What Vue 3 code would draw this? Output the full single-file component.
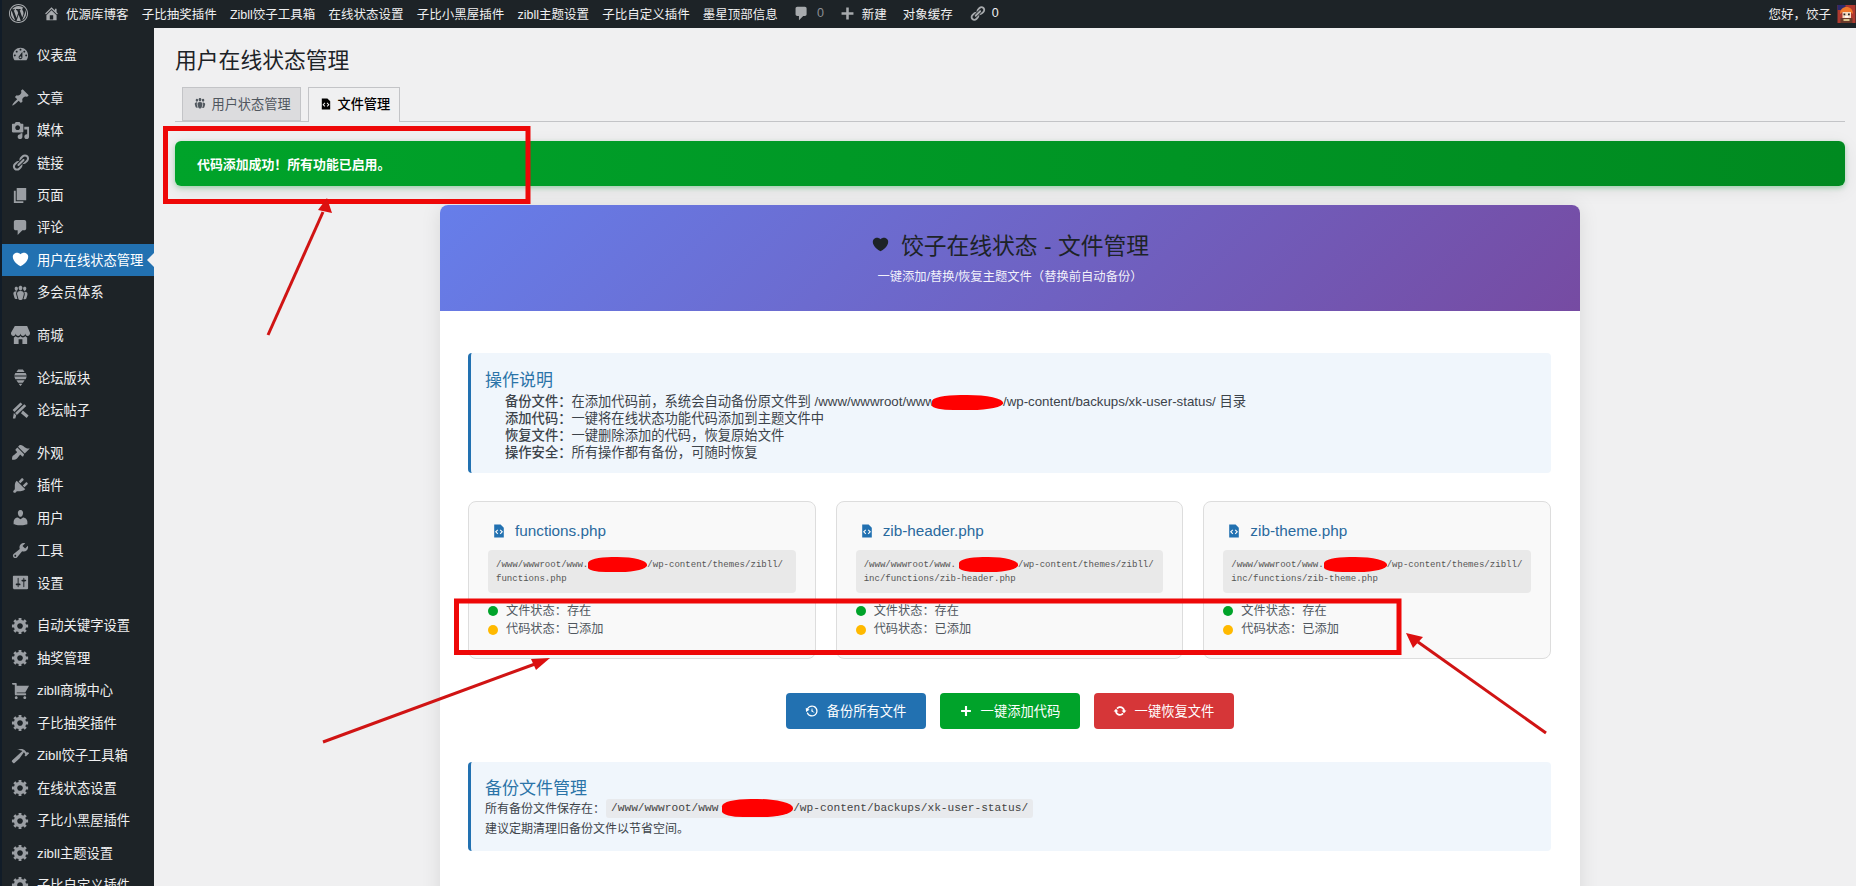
<script setup>
const icons = {
  dashboard: 'M3.76 16h12.48c1.1-1.37 1.76-3.11 1.76-5 0-4.42-3.58-8-8-8s-8 3.58-8 8c0 1.89.66 3.63 1.76 5zM10 4c.55 0 1 .45 1 1s-.45 1-1 1-1-.45-1-1 .45-1 1-1zM6 6c.55 0 1 .45 1 1s-.45 1-1 1-1-.45-1-1 .45-1 1-1zm8 0c.55 0 1 .45 1 1s-.45 1-1 1-1-.45-1-1 .45-1 1-1zm-5.37 5.55L12 7v6c0 1.1-.9 2-2 2s-2-.9-2-2c0-.57.24-1.08.63-1.45zM4 10c.55 0 1 .45 1 1s-.45 1-1 1-1-.45-1-1 .45-1 1-1zm12 0c.55 0 1 .45 1 1s-.45 1-1 1-1-.45-1-1 .45-1 1-1zm-5 3c0-.55-.45-1-1-1s-1 .45-1 1 .45 1 1 1 1-.45 1-1z',
  post: 'M10.44 3.02l1.82-1.82 6.36 6.35-1.83 1.82c-1.05-.68-2.48-.57-3.41.36l-.75.75c-.92.93-1.04 2.35-.35 3.41l-1.83 1.82-2.41-2.41-2.8 2.79c-.42.42-3.38 2.71-3.8 2.29s1.86-3.39 2.28-3.81l2.79-2.79L4.1 9.36l1.83-1.82c1.05.69 2.48.57 3.4-.36l.75-.75c.93-.92 1.05-2.35.36-3.41z',
  media: 'M13 11V4c0-.55-.45-1-1-1h-1.67L9 1H5L3.67 3H2c-.55 0-1 .45-1 1v7c0 .55.45 1 1 1h10c.55 0 1-.45 1-1zM7 4.5c1.38 0 2.5 1.12 2.5 2.5S8.38 9.5 7 9.5 4.5 8.38 4.5 7 5.62 4.5 7 4.5zM14 6h5v10.5c0 1.38-1.12 2.5-2.5 2.5S14 17.88 14 16.5s1.12-2.5 2.5-2.5c.17 0 .34.02.5.05V9h-3V6zm-4 8.05V13h2v3.5c0 1.38-1.12 2.5-2.5 2.5S7 17.88 7 16.5 8.12 14 9.5 14c.17 0 .34.02.5.05z',
  links: 'M17.74 2.76c1.68 1.69 1.68 4.41 0 6.1l-1.53 1.52c-1.12 1.12-2.7 1.47-4.14 1.09l2.62-2.61.76-.77.76-.76c.84-.84.84-2.2 0-3.04-.84-.85-2.2-.85-3.04 0l-.77.76-3.38 3.38c-.37-1.44-.02-3.02 1.1-4.14l1.52-1.53c1.69-1.68 4.42-1.68 6.1 0zM8.59 13.43l5.34-5.34c.42-.42.42-1.1 0-1.52-.44-.43-1.13-.39-1.53 0l-5.33 5.34c-.42.42-.42 1.1 0 1.52.44.43 1.13.39 1.52 0zm-.76 2.29l4.14-4.15c.38 1.44.03 3.02-1.09 4.14l-1.52 1.53c-1.69 1.68-4.41 1.68-6.1 0-1.68-1.68-1.68-4.42 0-6.1l1.53-1.52c1.12-1.12 2.7-1.47 4.14-1.1l-4.14 4.15c-.85.84-.85 2.2 0 3.05.84.84 2.2.84 3.04 0z',
  page: 'M6 15V2h10v13H6zm-1 1h8v2H3V5h2v11z',
  comments: 'M5 2h9c1.1 0 2 .9 2 2v7c0 1.1-.9 2-2 2h-2l-5 5v-5H5c-1.1 0-2-.9-2-2V4c0-1.1.9-2 2-2z',
  heart: 'M10 17.12c3.33-1.4 5.74-3.79 7.04-6.21 1.28-2.41 1.46-4.81.32-6.25-1.03-1.29-2.37-1.78-3.73-1.74s-2.68.63-3.63 1.46c-.95-.83-2.27-1.42-3.63-1.46s-2.7.45-3.73 1.74c-1.14 1.44-.96 3.84.34 6.25 1.28 2.42 3.69 4.81 7.02 6.21z',
  groups: 'M8.03 4.46c-.29 1.28.55 3.46 1.97 3.46 1.41 0 2.25-2.18 1.96-3.46-.22-.98-1.08-1.63-1.96-1.63-.89 0-1.74.65-1.97 1.63zm-4.13.9c-.25 1.08.47 2.93 1.67 2.93s1.92-1.85 1.67-2.93c-.19-.83-.92-1.39-1.67-1.39s-1.48.56-1.67 1.39zm8.86 0c-.25 1.08.47 2.93 1.66 2.93 1.2 0 1.92-1.85 1.67-2.93-.19-.83-.92-1.39-1.67-1.39-.74 0-1.47.56-1.66 1.39zm-.59 11.43l1.25-4.3C14.2 10 12.71 8.47 10 8.47c-2.72 0-4.21 1.53-3.44 4.02l1.26 4.3C8.05 17.51 9 18 10 18c.98 0 1.94-.49 2.17-1.21zm-6.1-7.63c-.49.67-.96 1.83-.42 3.59l1.12 3.79c-.34.2-.77.31-1.2.31-.85 0-1.65-.41-1.85-1.03l-1.07-3.65c-.65-2.11.61-3.41 2.92-3.41l.24.01c.29.09.3.3.26.39zm8.02-.03l.24-.01c2.31 0 3.57 1.3 2.92 3.41l-1.07 3.65c-.2.62-1 1.03-1.85 1.03-.43 0-.86-.11-1.2-.31l1.11-3.77c.54-1.76.07-2.92-.42-3.58-.04-.09-.03-.33.27-.42z',
  store: 'M1 10c.41.29.96.43 1.5.43.55 0 1.09-.14 1.5-.43.62-.46 1-1.17 1-2 0 .83.37 1.54 1 2 .41.29.96.43 1.5.43.55 0 1.09-.14 1.5-.43.62-.46 1-1.17 1-2 0 .83.37 1.54 1 2 .41.29.96.43 1.51.43.54 0 1.08-.14 1.49-.43.62-.46 1-1.17 1-2 0 .83.37 1.54 1 2 .41.29.96.43 1.5.43.55 0 1.09-.14 1.5-.43.63-.46 1-1.17 1-2V7l-3-7H4L0 7v1c0 .83.37 1.54 1 2zm2 8.99h5v-5h4v5h5v-7c-.37-.05-.72-.22-1-.43-.63-.45-1-.73-1-1.56 0 .83-.38 1.11-1 1.56-.41.3-.95.43-1.49.44-.55 0-1.1-.14-1.51-.44-.63-.45-1-.73-1-1.56 0 .83-.38 1.11-1 1.56-.41.3-.95.43-1.5.44-.54 0-1.09-.14-1.5-.44-.63-.45-1-.73-1-1.57 0 .84-.38 1.12-1 1.57-.29.21-.63.38-1 .44v6.99z',
  hive: 'M7.5 1.5h5l1.8 2.6H5.7zM4.6 5.2h10.8l1.2 2.8H3.4zM3.4 9h13.2l-1.2 2.8H4.6zM5.7 12.8h8.6l-1.8 2.8h-5zM8 16.6h4L10 19z',
  posts: 'M10 1.5l2 1.8-8.4 8.2-1.9-2zM14 3.5l2 1.8-9.8 9.4-1.9-2zM3 12.5l2.5 2.6-1 3.4H2zM12.5 10l6 5.2-2 2.8-6-5.2z',
  brush: 'M14.48 11.06L7.41 3.99l1.5-1.5c.5-.56 2.3-.47 3.51.32 1.21.8 1.43 1.28 2.91 2.1 1.18.64 2.45 1.26 4.45.85zm-.71.71L6.7 4.7 4.93 6.47c-.39.39-.39 1.02 0 1.41l1.06 1.06c.39.39.39 1.03 0 1.42-.6.6-1.43 1.11-2.21 1.69-.35.26-.7.53-1.01.84C1.43 13.23 1 15.36 1.13 17.5l.01.01c2.02.26 4.06-.14 5.42-1.5.31-.31.58-.66.84-1.01.58-.78 1.09-1.61 1.69-2.21.39-.39 1.02-.39 1.41 0l1.06 1.06c.39.39 1.02.39 1.41 0z',
  plugins: 'M13.11 4.36L9.87 7.6 8 5.73l3.24-3.24c.35-.34 1.05-.2 1.56.32.52.51.66 1.21.31 1.55zm-8 1.77l.91-1.12 9.01 9.01-1.19.84c-.71.71-2.63 1.16-3.82 1.16H6.14L4.9 17.26c-.59.59-1.54.59-2.12 0-.59-.58-.59-1.53 0-2.12l1.24-1.24v-3.88c0-1.13.4-3.19 1.09-3.89zm7.26 3.97l3.24-3.24c.34-.35 1.04-.21 1.55.31.52.51.66 1.21.31 1.55l-3.24 3.25z',
  users: 'M10 9.25c-2.27 0-2.73-3.44-2.73-3.44C7 4.02 7.82 2 9.97 2c2.16 0 2.98 2.02 2.71 3.81 0 0-.41 3.44-2.68 3.44zm0 2.57L12.72 10c2.39 0 4.52 2.33 4.52 4.53v2.49s-3.65 1.13-7.24 1.13c-3.65 0-7.24-1.13-7.24-1.13v-2.49c0-2.25 1.94-4.48 4.47-4.48z',
  tools: 'M16.68 9.77c-1.34 1.34-3.3 1.67-4.95.99l-5.41 6.52c-.99.99-2.59.99-3.58 0s-.99-2.59 0-3.57l6.52-5.42c-.68-1.65-.35-3.61.99-4.95 1.28-1.28 3.12-1.62 4.72-1.06l-2.89 2.89 2.82 2.82 2.86-2.87c.53 1.58.18 3.39-1.08 4.65zM3.81 16.21c.4.39 1.04.39 1.43 0 .4-.4.4-1.04 0-1.43-.39-.4-1.03-.4-1.43 0-.39.39-.39 1.03 0 1.43z',
  settings: 'M18 16V4c0-.55-.45-1-1-1H3c-.55 0-1 .45-1 1v12c0 .55.45 1 1 1h14c.55 0 1-.45 1-1zM8 11h1c.55 0 1 .45 1 1s-.45 1-1 1H8v1.5c0 .28-.22.5-.5.5s-.5-.22-.5-.5V13H6c-.55 0-1-.45-1-1s.45-1 1-1h1V5.5c0-.28.22-.5.5-.5s.5.22.5.5V11zm5-2h-1c-.55 0-1-.45-1-1s.45-1 1-1h1V5.5c0-.28.22-.5.5-.5s.5.22.5.5V7h1c.55 0 1 .45 1 1s-.45 1-1 1h-1v5.5c0 .28-.22.5-.5.5s-.5-.22-.5-.5V9z',
  gear: 'M18 12h-2.18c-.17.7-.44 1.35-.81 1.93l1.54 1.54-2.1 2.1-1.54-1.54c-.58.36-1.23.63-1.91.79V19H8v-2.18c-.68-.16-1.33-.43-1.91-.79l-1.54 1.54-2.12-2.12 1.54-1.54c-.36-.58-.63-1.23-.79-1.91H1V9.03h2.17c.16-.7.44-1.35.8-1.94L2.43 5.55l2.1-2.1 1.54 1.54c.58-.37 1.24-.64 1.93-.81V2h3v2.18c.68.16 1.33.43 1.91.79l1.54-1.54 2.12 2.12-1.54 1.54c.36.59.64 1.24.8 1.94H18V12zm-8.5 1.5c1.66 0 3-1.34 3-3s-1.34-3-3-3-3 1.34-3 3 1.34 3 3 3z',
  cart: 'M6 13h9c.55 0 1 .45 1 1s-.45 1-1 1H5c-.55 0-1-.45-1-1V4H2c-.55 0-1-.45-1-1s.45-1 1-1h3c.55 0 1 .45 1 1v2h13l-4 7H6v1zm-.5 3c.83 0 1.5.67 1.5 1.5S6.33 19 5.5 19 4 18.33 4 17.5 4.67 16 5.5 16zm9 0c.83 0 1.5.67 1.5 1.5s-.67 1.5-1.5 1.5-1.5-.67-1.5-1.5.67-1.5 1.5-1.5z',
  hammer: 'M17.7 6.32l1.41 1.42-3.47 3.41-1.42-1.42.84-.82c-.32-.76-.81-1.57-1.51-2.31l-4.61 6.59-5.26 4.7c-.39.39-1.02.39-1.42 0l-1.2-1.21c-.39-.39-.39-1.02 0-1.41l10.97-9.92c-1.37-.86-3.21-1.46-5.67-1.48 2.7-.82 4.95-.93 6.58-.3 1.7.66 2.82 2.2 3.91 3.58z',
  wp: 'M20 10c0-5.52-4.48-10-10-10S0 4.48 0 10s4.48 10 10 10 10-4.48 10-10zM10 1.01c4.97 0 8.99 4.02 8.99 8.99s-4.02 8.99-8.99 8.99S1.01 14.97 1.01 10 5.03 1.01 10 1.01zM8.01 14.82L4.96 6.61c.49-.03 1.05-.08 1.05-.08.43-.05.38-1.01-.06-.99 0 0-1.29.1-2.13.1-.15 0-.33 0-.52-.01 1.44-2.17 3.9-3.6 6.7-3.6 2.09 0 3.99.79 5.41 2.09-.6-.08-1.45.35-1.45 1.42 0 .66.38 1.22.79 1.88.31.54.5 1.22.5 2.21 0 1.34-1.27 4.48-1.27 4.48l-2.71-7.5c.48-.03.75-.16.75-.16.43-.05.38-1.1-.05-1.08 0 0-1.3.11-2.14.11-.78 0-2.11-.11-2.11-.11-.43-.02-.48 1.06-.05 1.08l.84.08 1.12 3.04zm6.02 2.15L16.64 10s.67-1.69.39-3.81c.63 1.14.94 2.42.94 3.81 0 2.96-1.56 5.58-3.94 6.97zM2.68 6.77L6.5 17.25c-2.67-1.3-4.47-4.08-4.47-7.25 0-1.16.2-2.23.65-3.23zm7.45 4.53l2.29 6.25c-.75.27-1.57.42-2.42.42-.72 0-1.41-.11-2.06-.3z',
  home: 'M16 8.5l1.53 1.53-1.06 1.06L10 4.62l-6.47 6.47-1.06-1.06L10 2.5l4 4v-2h2v4zm-6-2.46l6 5.99V18H4v-5.97zM12 17v-5H8v5h4z',
  plus: 'M17 8.5v3h-5.5V17h-3v-5.5H3v-3h5.5V3h3v5.5z',
  code: 'M12 2l4 4v12H4V2h8zM9 13l-2-2 2-2-1-1-3 3 3 3zm3 1l3-3-3-3-1 1 2 2-2 2z',
  backup: 'M13.65 2.88c3.93 2.01 5.48 6.84 3.47 10.77s-6.83 5.48-10.77 3.47c-1.87-.96-3.2-2.56-3.86-4.4l1.64-1.03c.45 1.57 1.52 2.95 3.08 3.76 3.01 1.54 6.69.35 8.23-2.66 1.55-3.01.36-6.69-2.65-8.24C9.78 3.01 6.1 4.2 4.56 7.21l1.88.97-4.95 3.08-.39-5.82 1.78.91C4.9 2.4 9.75.89 13.65 2.88zm-4.36 7.83C9.11 10.53 9 10.28 9 10c0-.07.03-.12.04-.19h-.01L10 5l.97 4.81L14 13l-4.5-2.12.02-.02c-.08-.04-.16-.09-.23-.15z',
  update: 'M10.2 3.28c3.53 0 6.43 2.61 6.92 6h2.08l-3.5 4-3.5-4h2.32c-.45-1.97-2.21-3.44-4.32-3.44-1.45 0-2.73.71-3.54 1.78L4.95 5.66C6.23 4.2 8.11 3.28 10.2 3.28zm-.4 13.44c-3.52 0-6.43-2.61-6.92-6H.8l3.5-4c1.17 1.33 2.33 2.67 3.5 4H5.48c.45 1.97 2.21 3.44 4.32 3.44 1.45 0 2.73-.71 3.54-1.78l1.71 1.95c-1.28 1.46-3.15 2.39-5.25 2.39z'
}

const barLinks = ['子比抽奖插件', 'Zibll饺子工具箱', '在线状态设置', '子比小黑屋插件', 'zibll主题设置', '子比自定义插件', '墨星顶部信息']

const menu = [
  { t: '仪表盘', i: 'dashboard' },
  { t: '文章', i: 'post', sep: true },
  { t: '媒体', i: 'media' },
  { t: '链接', i: 'links' },
  { t: '页面', i: 'page' },
  { t: '评论', i: 'comments' },
  { t: '用户在线状态管理', i: 'heart', active: true },
  { t: '多会员体系', i: 'groups' },
  { t: '商城', i: 'store', sep: true },
  { t: '论坛版块', i: 'hive', sep: true },
  { t: '论坛帖子', i: 'posts' },
  { t: '外观', i: 'brush', sep: true },
  { t: '插件', i: 'plugins' },
  { t: '用户', i: 'users' },
  { t: '工具', i: 'tools' },
  { t: '设置', i: 'settings' },
  { t: '自动关键字设置', i: 'gear', sep: true },
  { t: '抽奖管理', i: 'gear' },
  { t: 'zibll商城中心', i: 'cart' },
  { t: '子比抽奖插件', i: 'gear' },
  { t: 'Zibll饺子工具箱', i: 'hammer' },
  { t: '在线状态设置', i: 'gear' },
  { t: '子比小黑屋插件', i: 'gear' },
  { t: 'zibll主题设置', i: 'gear' },
  { t: '子比自定义插件', i: 'gear' }
]

const steps = [
  { k: '添加代码：', v: '一键将在线状态功能代码添加到主题文件中' },
  { k: '恢复文件：', v: '一键删除添加的代码，恢复原始文件' },
  { k: '操作安全：', v: '所有操作都有备份，可随时恢复' }
]

const files = [
  { name: 'functions.php', blob: 'b1', line2: 'functions.php' },
  { name: 'zib-header.php', blob: 'b2', line2: 'inc/functions/zib-header.php' },
  { name: 'zib-theme.php', blob: 'b3', line2: 'inc/functions/zib-theme.php' }
]

const buttons = [
  { t: '备份所有文件', i: 'backup', c: 'blue' },
  { t: '一键添加代码', i: 'plus', c: 'green' },
  { t: '一键恢复文件', i: 'update', c: 'red' }
]
</script>

<template>
  <div class="page">
    <header class="bar">
      <svg class="wp" viewBox="0 0 20 20"><path :d="icons.wp" fill-rule="evenodd" /></svg>
      <svg class="home" viewBox="0 0 20 20"><path :d="icons.home" /></svg>
      <span class="site">优源库博客</span>
      <span v-for="l in barLinks" :key="l" class="bl">{{ l }}</span>
      <svg class="bi cm" viewBox="0 0 20 20"><path :d="icons.comments" /></svg>
      <span class="zero grey">0</span>
      <svg class="bi pl" viewBox="0 0 20 20"><path :d="icons.plus" /></svg>
      <span class="nw">新建</span>
      <span class="cache">对象缓存</span>
      <svg class="bi lk" viewBox="0 0 20 20"><path :d="icons.links" /></svg>
      <span class="zero">0</span>
      <span class="hello">您好，饺子</span>
      <svg class="avatar" viewBox="0 0 18 18">
        <rect width="18" height="18" fill="#b03a30" />
        <rect width="8" height="5" fill="#2c2a6e" />
        <path d="M2.5 9c0-4.5 3-7 6.5-7s6.500 2.500 6.500 7l-2.500-2H5z" fill="#f0782a" />
        <rect x="5" y="7" width="8.500" height="6" fill="#f6dcc0" />
        <rect x="6" y="8.500" width="1.800" height="1.800" fill="#222" />
        <rect x="10.500" y="8.500" width="1.800" height="1.800" fill="#222" />
        <rect x="7.500" y="11" width="3.500" height="1.500" fill="#fff" />
        <rect x="3" y="13" width="12" height="5" fill="#6b3a2a" />
        <rect x="6" y="14" width="6" height="2" fill="#d9c48a" />
      </svg>
    </header>

    <div class="body">
      <nav class="side">
        <a v-for="m in menu" :key="m.t" class="mi" :class="{ sep: m.sep, on: m.active }">
          <span class="mic"><svg viewBox="0 0 20 20"><path :d="icons[m.i]" fill-rule="evenodd" /></svg></span>
          <span class="mt">{{ m.t }}</span>
        </a>
      </nav>

      <main class="main">
        <h1 class="h1">用户在线状态管理</h1>
        <div class="tabs">
          <div class="tab t1">
            <svg viewBox="0 0 20 20"><path :d="icons.groups" /></svg>
            <span>用户状态管理</span>
          </div>
          <div class="tab cur">
            <svg viewBox="0 0 20 20"><path :d="icons.code" fill-rule="evenodd" /></svg>
            <span>文件管理</span>
          </div>
        </div>

        <div class="notice">代码添加成功！所有功能已启用。</div>

        <section class="card">
          <div class="head">
            <h2 class="ht">
              <svg viewBox="0 0 20 20"><path :d="icons.heart" /></svg>
              <span>饺子在线状态 - 文件管理</span>
            </h2>
            <p class="hs">一键添加/替换/恢复主题文件（替换前自动备份）</p>
          </div>

          <div class="cbody">
            <div class="infobox first">
              <h3 class="ibt">操作说明</h3>
              <ul class="steps">
                <li>
                  <strong>备份文件：</strong>在添加代码前，系统会自动备份原文件到 /www/wwwroot/www<span class="blob b0"></span>/wp-content/backups/xk-user-status/ 目录
                </li>
                <li v-for="s in steps" :key="s.k"><strong>{{ s.k }}</strong>{{ s.v }}</li>
              </ul>
            </div>

            <div class="grid">
              <article v-for="f in files" :key="f.name" class="fc">
                <h4 class="fn">
                  <svg viewBox="0 0 20 20"><path :d="icons.code" fill-rule="evenodd" /></svg>
                  <span>{{ f.name }}</span>
                </h4>
                <div class="path">
                  <div>/www/wwwroot/www.<span class="blob" :class="f.blob"></span>/wp-content/themes/zibll/</div>
                  <div>{{ f.line2 }}</div>
                </div>
                <div class="st"><i class="dot g"></i>文件状态：存在</div>
                <div class="st"><i class="dot y"></i>代码状态：已添加</div>
              </article>
            </div>

            <div class="btns">
              <button v-for="b in buttons" :key="b.t" class="btn" :class="b.c">
                <svg viewBox="0 0 20 20"><path :d="icons[b.i]" /></svg>
                <span>{{ b.t }}</span>
              </button>
            </div>

            <div class="infobox second">
              <h3 class="ibt">备份文件管理</h3>
              <p class="bl1">所有备份文件保存在：<code class="cd">/www/wwwroot/www <span class="blob b4"></span>/wp-content/backups/xk-user-status/</code></p>
              <p class="bl1">建议定期清理旧备份文件以节省空间。</p>
            </div>
          </div>
        </section>
      </main>
    </div>

    <svg class="marks" viewBox="0 0 1856 886" width="1856" height="886">
      <rect x="165.5" y="128.5" width="362.5" height="73" fill="none" stroke="#ee0808" stroke-width="5" />
      <rect x="456.500" y="601" width="942.500" height="51.500" fill="none" stroke="#ee0808" stroke-width="5" />
      <g fill="none" stroke="#d01414" stroke-width="3">
        <path d="M268 335 323 212" />
        <path d="M323 742 535 664" />
        <path d="M1546 733 1418 642" />
      </g>
      <g fill="#dc1010">
        <path d="M327 198 332 213 318 210z" />
        <path d="M550 658 536 670 531 659z" />
        <path d="M1406 633 1423 637 1413 648z" />
      </g>
    </svg>
  </div>
</template>

<style scoped>
.page {
  position: relative;
  width: 1856px;
  height: 886px;
  overflow: hidden;
  display: flex;
  flex-direction: column;
  background: #f0f0f1;
  font-family: "Liberation Sans", "Noto Sans CJK SC", sans-serif;
  color: #3c434a;
}
.bar {
  flex: none;
  height: 28px;
  box-sizing: border-box;
  padding-bottom: 2px;
  display: flex;
  align-items: center;
  background: #1d2327;
  color: #f0f0f1;
  font-size: 12.5px;
  border-left: 2px solid #111c28;
  white-space: nowrap;
}
.bar svg { fill: #a7aaad; flex: none; }
.wp { width: 19px; height: 19px; margin-left: 7px; }
.home { width: 17px; height: 17px; margin-left: 15px; }
.site { margin-left: 6px; }
.bl { margin-left: 13.2px; }
.bi { width: 17px; height: 17px; }
.cm { margin-left: 15px; }
.zero { margin-left: 7px; }
.grey { color: #8c8f94; }
.pl { margin-left: 15px; }
.nw { margin-left: 6px; }
.cache { margin-left: 16px; }
.lk { margin-left: 16px; }
.bar .lk + .zero { margin-left: 6px; }
.hello { margin-left: auto; }
.avatar { width: 19px; height: 18px; margin-left: 6px; margin-top: 2px; }

.body { flex: 1; display: flex; min-height: 0; }
.side {
  flex: none;
  width: 152px;
  background: #1d2327;
  border-left: 2px solid #111c28;
  padding-top: 10.75px;
}
.mi {
  position: relative;
  display: flex;
  align-items: center;
  height: 32.45px;
  color: #f0f0f1;
  font-size: 13.3px;
  white-space: nowrap;
}
.sep { margin-top: 10.3px; }
.mic { width: 34px; display: flex; justify-content: center; padding-left: 1px; }
.mic svg { width: 19px; height: 19px; fill: #9a9ea3; }
.mt { position: relative; top: -.5px; }
.on { background: #2271b1; color: #fff; }
.on .mic svg { fill: #fff; }
.on::after {
  content: "";
  position: absolute;
  right: 0;
  top: 9.5px;
  border: 7px solid transparent;
  border-right-color: #f0f0f1;
  border-left-width: 0;
}

.main { flex: 1; min-width: 0; padding: 18px 11px 0 21px; }
.h1 {
  margin: 0;
  font-size: 21.8px;
  line-height: 30px;
  font-weight: 400;
  color: #1d2327;
}
.tabs {
  display: flex;
  gap: 7px;
  height: 34px;
  margin-top: 11px;
  padding-left: 7px;
  border-bottom: 1px solid #c3c4c7;
}
.tab {
  display: flex;
  align-items: center;
  gap: 4.5px;
  height: 34px;
  padding: 0 0 2px 10px;
  box-sizing: border-box;
  border: 1px solid #c3c4c7;
  background: #dcdcde;
  color: #50575e;
  font-size: 13.2px;
}
.t1 { width: 119px; }
.tab svg { width: 14px; height: 14px; fill: #50575e; flex: none; }
.tab.cur {
  width: 92px;
  background: #f0f0f1;
  color: #000;
  font-weight: 500;
  height: 35px;
  border-bottom: 0;
  padding-bottom: 3px;
}
.tab.cur svg { fill: #000; }

.notice {
  margin-top: 19px;
  height: 45px;
  display: flex;
  align-items: center;
  padding-left: 22px;
  border-radius: 6px;
  background: linear-gradient(90deg, #00a32a, #008a20);
  color: #fff;
  font-size: 12.9px;
  font-weight: 700;
  box-shadow: 0 2px 5px rgba(0, 163, 42, .3), 0 4px 18px rgba(0, 0, 0, .08);
}

.card {
  width: 1140px;
  height: 700px;
  margin: 19px auto 0;
  background: #fff;
  border-radius: 8px 8px 0 0;
  box-shadow: 0 2px 20px rgba(0, 0, 0, .1);
}
.head {
  height: 106px;
  box-sizing: border-box;
  padding-top: 25px;
  text-align: center;
  border-radius: 8px 8px 0 0;
  background: linear-gradient(135deg, #667eea 0%, #764ba2 100%);
}
.ht {
  margin: 0;
  display: flex;
  justify-content: center;
  align-items: center;
  gap: 11px;
  height: 28px;
  font-size: 22.8px;
  font-weight: 400;
  color: #1d2327;
}
.ht svg { width: 19px; height: 19px; fill: #1d2327; }
.hs {
  margin: 11px 0 0;
  font-size: 12.3px;
  line-height: 16px;
  color: rgba(255, 255, 255, .92);
}
.cbody { padding: 42px 29px 0 28px; }

.infobox {
  box-sizing: border-box;
  padding-left: 14px;
  border-left: 3px solid #2271b1;
  border-radius: 4px;
  background: #f0f6fc;
}
.first { height: 120px; padding-top: 18px; }
.second { height: 89px; margin-top: 33px; padding-top: 17px; }
.ibt {
  margin: 0;
  font-size: 17px;
  line-height: 20px;
  font-weight: 400;
  color: #2b74a8;
}
.steps { list-style: none; margin: 2px 0 0; padding: 0 0 0 20px; }
.steps li { font-size: 13.3px; line-height: 17px; white-space: nowrap; }
.steps strong { color: #3c434a; font-weight: 500; }

.blob {
  display: inline-block;
  height: 15px;
  margin: -4px 0;
  vertical-align: middle;
  background: #f00;
  border-radius: 40% 50% 45% 30%;
}
.b0 { width: 71px; margin-left: -3px; }
.b1 { width: 59px; }
.b2 { width: 59px; margin-left: 3px; }
.b3 { width: 63px; }
.b4 { width: 71px; height: 18px; margin-left: -3px; }

.grid {
  display: grid;
  grid-template-columns: repeat(3, 1fr);
  gap: 20px;
  margin-top: 28px;
}
.fc {
  height: 158px;
  box-sizing: border-box;
  padding: 18px 19px 0;
  background: #f9f9f9;
  border: 1px solid #ddd;
  border-radius: 8px;
}
.fn {
  margin: 0;
  display: flex;
  align-items: center;
  gap: 8px;
  padding-left: 3px;
  height: 22px;
  font-size: 15.3px;
  font-weight: 400;
  color: #2a6a9e;
}
.fn svg { width: 16px; height: 16px; fill: #2271b1; flex: none; }
.path {
  box-sizing: border-box;
  height: 43px;
  margin-top: 8px;
  padding: 7.5px 8px 0;
  border-radius: 4px;
  background: #e9e9e9;
  color: #555;
  font-family: "Liberation Mono", monospace;
  font-size: 9.05px;
  line-height: 14px;
  white-space: nowrap;
}
.st {
  display: flex;
  align-items: center;
  font-size: 12.2px;
  line-height: 18.7px;
  color: #50575e;
}
.path + .st { margin-top: 8.5px; }
.dot { width: 10px; height: 10px; border-radius: 50%; margin-right: 8px; flex: none; }
.g { background: #00a32a; }
.y { background: #ffb900; }

.btns {
  display: flex;
  justify-content: center;
  gap: 14px;
  margin-top: 33.5px;
}
.btn {
  display: flex;
  align-items: center;
  justify-content: center;
  gap: 8px;
  width: 140px;
  height: 36px;
  padding: 0;
  border: 0;
  border-radius: 4px;
  color: #fff;
  font-family: inherit;
  font-size: 13.3px;
}
.btn svg { width: 14px; height: 14px; fill: #fff; }
.blue { background: #2271b1; }
.green { background: #00a32a; }
.red { background: #d63638; }

.bl1 { margin: 0; font-size: 12px; line-height: 20px; white-space: nowrap; color: #3c434a; }
.cd {
  display: inline-block;
  height: 19px;
  padding: 0 5px;
  margin-left: 1px;
  box-sizing: border-box;
  border-radius: 3px;
  background: #e8eaed;
  font-family: "Liberation Mono", monospace;
  font-size: 11.2px;
  line-height: 19px;
  vertical-align: top;
  color: #444;
}

.marks { position: absolute; left: 0; top: 0; pointer-events: none; }
</style>

<style>
html, body { margin: 0; background: #f0f0f1; }
</style>
